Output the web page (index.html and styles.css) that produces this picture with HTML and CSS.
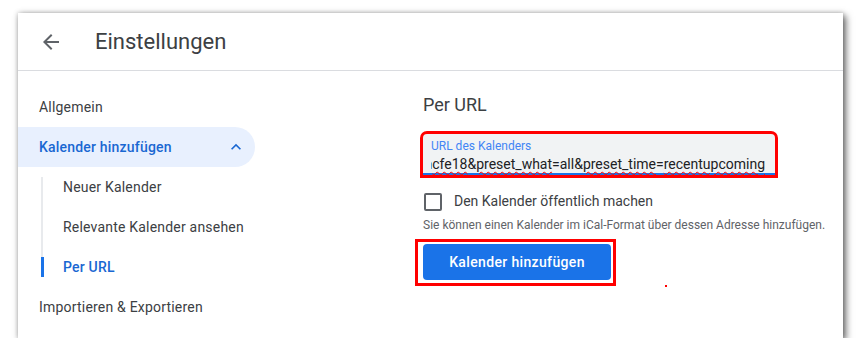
FILE: index.html
```html
<!DOCTYPE html>
<html lang="de">
<head>
    <meta charset="UTF-8">
    <title>Einstellungen</title>
    <link rel="stylesheet" href="styles.css">
</head>
<body>
    <div class="window">
        <header class="topbar">
            <svg class="back" viewBox="0 0 24 24" width="24" height="24"><path d="M20 11H7.83l5.59-5.59L12 4l-8 8 8 8 1.41-1.41L7.83 13H20v-2z"/></svg>
            <h1>Einstellungen</h1>
        </header>

        <div class="body">
            <nav class="sidebar">
                <div class="nav-item">Allgemein</div>
                <div class="nav-item active">
                    <span>Kalender hinzufügen</span>
                    <svg class="chev" viewBox="0 0 24 24" width="20" height="20"><path d="M12 8l-6 6 1.41 1.41L12 10.83l4.59 4.58L18 14z"/></svg>
                </div>
                <div class="sub-list">
                    <div class="sub-item">Neuer Kalender</div>
                    <div class="sub-item">Relevante Kalender ansehen</div>
                    <div class="sub-item current">Per URL</div>
                </div>
                <div class="nav-item">Importieren &amp; Exportieren</div>
            </nav>

            <main class="content">
                <h2>Per URL</h2>

                <div class="field marked">
                    <div class="field-label">URL des Kalenders</div>
                    <div class="field-value"><span>b6e2a0d6f9a8c91e7d4a<span class="sp">cfe18</span>&amp;<span class="sp">preset_what</span>=all&amp;<span class="sp">preset_time</span>=<span class="sp">recentupcoming</span></span></div>
                </div>

                <label class="check-row">
                    <span class="box"></span>
                    Den Kalender öffentlich machen
                </label>

                <p class="hint">Sie können einen Kalender im iCal-Format über dessen Adresse hinzufügen.</p>

                <div class="btn-row">
                    <span class="btn-mark"><button class="primary">Kalender hinzufügen</button></span>
                    <span class="dot"></span>
                </div>
            </main>
        </div>
    </div>
</body>
</html>
```

FILE: styles.css
```css
/* page */
body {
    margin: 0;
    background-color: #fff;
    font-family: Roboto, "Liberation Sans", Arial, sans-serif;
    color: #3c4043;
}

.window {
    margin: 13px 0 0 18px;
    width: 825px;
    height: 325px;
    background: #fff;
    box-shadow: 3px 3px 7px rgba(0, 0, 0, 0.55), 0 0 5px rgba(0, 0, 0, 0.25);
    overflow: hidden;
}

/* header */
.topbar {
    height: 57px;
    border-bottom: 1px solid #dadce0;
    display: flex;
    align-items: center;
}

.back {
    fill: #5f6368;
    margin: 0 0 0 21px;
}

.topbar h1 {
    margin: 0 0 0 32px;
    font-size: 22px;
    font-weight: 400;
    color: #3c4043;
}

.body {
    display: flex;
}

/* sidebar */
.sidebar {
    width: 237px;
    padding-top: 16px;
    font-size: 14px;
    letter-spacing: 0.2px;
}

.nav-item {
    height: 40px;
    display: flex;
    align-items: center;
    padding-left: 21px;
}

.nav-item.active {
    background: #e8f0fe;
    color: #1967d2;
    font-weight: 500;
    border-radius: 0 20px 20px 0;
    justify-content: space-between;
    padding-right: 9px;
}

.chev {
    fill: #1967d2;
}

.sub-list {
    position: relative;
    margin-left: 23px;
}

.sub-list::before {
    content: "";
    position: absolute;
    left: 0;
    top: 10px;
    bottom: 10px;
    width: 2px;
    background: #e8eaed;
}

.sub-item {
    position: relative;
    height: 40px;
    display: flex;
    align-items: center;
    padding-left: 22px;
}

.sub-item.current {
    color: #1967d2;
    font-weight: 500;
}

.sub-item.current::before {
    content: "";
    position: absolute;
    left: 0;
    top: 10px;
    width: 3px;
    height: 20px;
    background: #1a73e8;
}

/* content */
.content {
    margin-left: 168px;
    padding-top: 20px;
}

.content h2 {
    margin: 0;
    font-size: 18px;
    font-weight: 400;
    line-height: 28px;
    color: #3c4043;
}

.field {
    margin-top: 15px;
    width: 352px;
    height: 41px;
    box-sizing: border-box;
    background: #f1f3f4;
    border-bottom: 2px solid #1a73e8;
    border-radius: 4px 4px 0 0;
    padding: 5px 10px 0 8px;
}

.marked {
    outline: 3px solid #f00;
}

.field-label {
    font-size: 12px;
    line-height: 15px;
    color: #4285f4;
}

.field-value {
    margin-top: 2px;
    font-size: 14px;
    line-height: 16px;
    padding-bottom: 4px;
    white-space: nowrap;
    overflow: hidden;
    direction: rtl;
    text-align: left;
    color: #202124;
}

.field-value > span {
    direction: ltr;
    unicode-bidi: embed;
}

.sp {
    text-decoration: underline wavy #f00 1px;
    text-underline-offset: 2px;
}

.check-row {
    margin-top: 16px;
    display: flex;
    align-items: center;
    height: 20px;
    font-size: 14px;
    color: #3c4043;
}

.box {
    width: 18px;
    height: 18px;
    box-sizing: border-box;
    border: 2px solid #5f6368;
    border-radius: 2px;
    margin: 1px 12px 0 1px;
}

.hint {
    margin: 6px 0 0;
    font-size: 12px;
    line-height: 16px;
    color: #5f6368;
}

.btn-row {
    margin-top: 6px;
    display: flex;
    align-items: flex-end;
}

.btn-mark {
    display: inline-block;
    margin-left: -8px;
    border: 3px solid #f00;
    padding: 2px 2px 3px 5px;
}

.primary {
    display: block;
    width: 188px;
    height: 36px;
    background: #1a73e8;
    color: #fff;
    border: none;
    border-radius: 4px;
    font-family: Roboto, "Liberation Sans", Arial, sans-serif;
    font-size: 14px;
    font-weight: 500;
    letter-spacing: 0.35px;
}

.dot {
    width: 2px;
    height: 2px;
    background: #f00;
    margin: 0 0 -1px 49px;
}
```
